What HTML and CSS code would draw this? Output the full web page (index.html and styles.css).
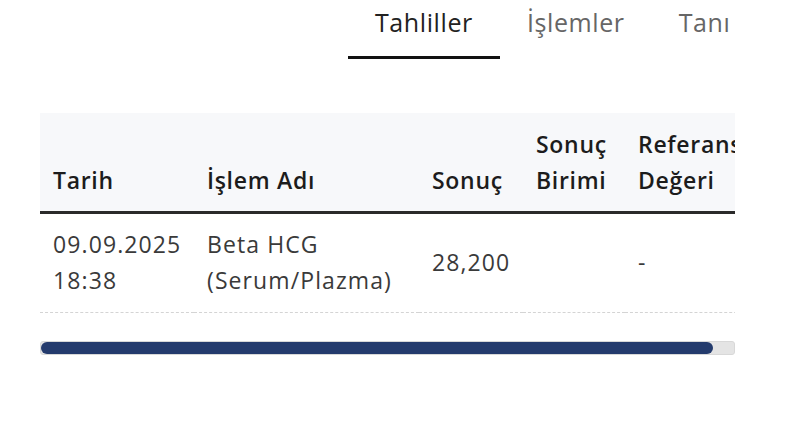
FILE: index.html
```html
<!DOCTYPE html>
<html lang="tr">
<head>
  <meta charset="UTF-8" />
  <title>Tahliller</title>
  <meta name="viewport" content="width=device-width, initial-scale=1">
  <link rel="stylesheet" href="styles.css">
</head>
<body>
  <div class="page">
    <nav class="tabs">
      <a class="tab active">Tahliller</a>
      <a class="tab">İşlemler</a>
      <a class="tab">Tanı</a>
    </nav>

    <div class="scroll">
      <table class="results">
        <colgroup>
          <col class="c-date">
          <col class="c-name">
          <col class="c-value">
          <col class="c-unit">
          <col class="c-ref">
        </colgroup>
        <thead>
          <tr>
            <th>Tarih</th>
            <th>İşlem Adı</th>
            <th>Sonuç</th>
            <th>Sonuç Birimi</th>
            <th>Referans Değeri</th>
          </tr>
        </thead>
        <tbody>
          <tr>
            <td>09.09.2025 18:38</td>
            <td>Beta HCG (Serum/Plazma)</td>
            <td>28,200</td>
            <td></td>
            <td>-</td>
          </tr>
        </tbody>
      </table>
    </div>
    <div class="scrollbar">
      <div class="thumb" style="width: 97%;"></div>
    </div>
  </div>
</body>
</html>
```

FILE: styles.css
```css
body {
  font-family: 'Open Sans', 'Noto Sans', sans-serif;
  background: #fff;
  color: #333;
  margin: 0;
}
.page {
  width: 695px;
  margin-left: 40px;
  overflow: hidden;
}
.tabs {
  display: flex;
  white-space: nowrap;
  margin-top: 3px;
  padding-left: 308px;
}
.tab {
  font-size: 25px;
  line-height: 39px;
  letter-spacing: 0.6px;
  padding: 0 27px 14px;
  color: #666;
  border-bottom: 3px solid transparent;
  cursor: pointer;
}
.tab.active {
  color: #222;
  border-bottom-color: #111;
}
.scroll {
  margin-top: 54px;
  overflow: hidden;
}
.results {
  table-layout: fixed;
  width: 717px;
  border-collapse: collapse;
  font-size: 23px;
  line-height: 36px;
}
.c-date { width: 154px; }
.c-name { width: 225px; }
.c-value { width: 104px; }
.c-unit { width: 102px; }
.c-ref { width: 132px; }
th {
  background: #f7f8fa;
  color: #1c1c1c;
  font-weight: 600;
  letter-spacing: 0.7px;
  text-align: left;
  vertical-align: bottom;
  padding: 13px;
  border-bottom: 3px solid #2a2a2a;
}
td {
  color: #3a3a3a;
  letter-spacing: 1.1px;
  vertical-align: middle;
  padding: 12px 13px 14px;
  border-bottom: 1px dashed #d4d4d4;
}
.scrollbar {
  margin-top: 28px;
  height: 14px;
  background: #e4e4e4;
  border: 1px solid #d8d8d8;
  border-radius: 3px;
  box-sizing: border-box;
  overflow: hidden;
}
.thumb {
  height: 100%;
  background: #243b6d;
  border-radius: 7px;
}
```
